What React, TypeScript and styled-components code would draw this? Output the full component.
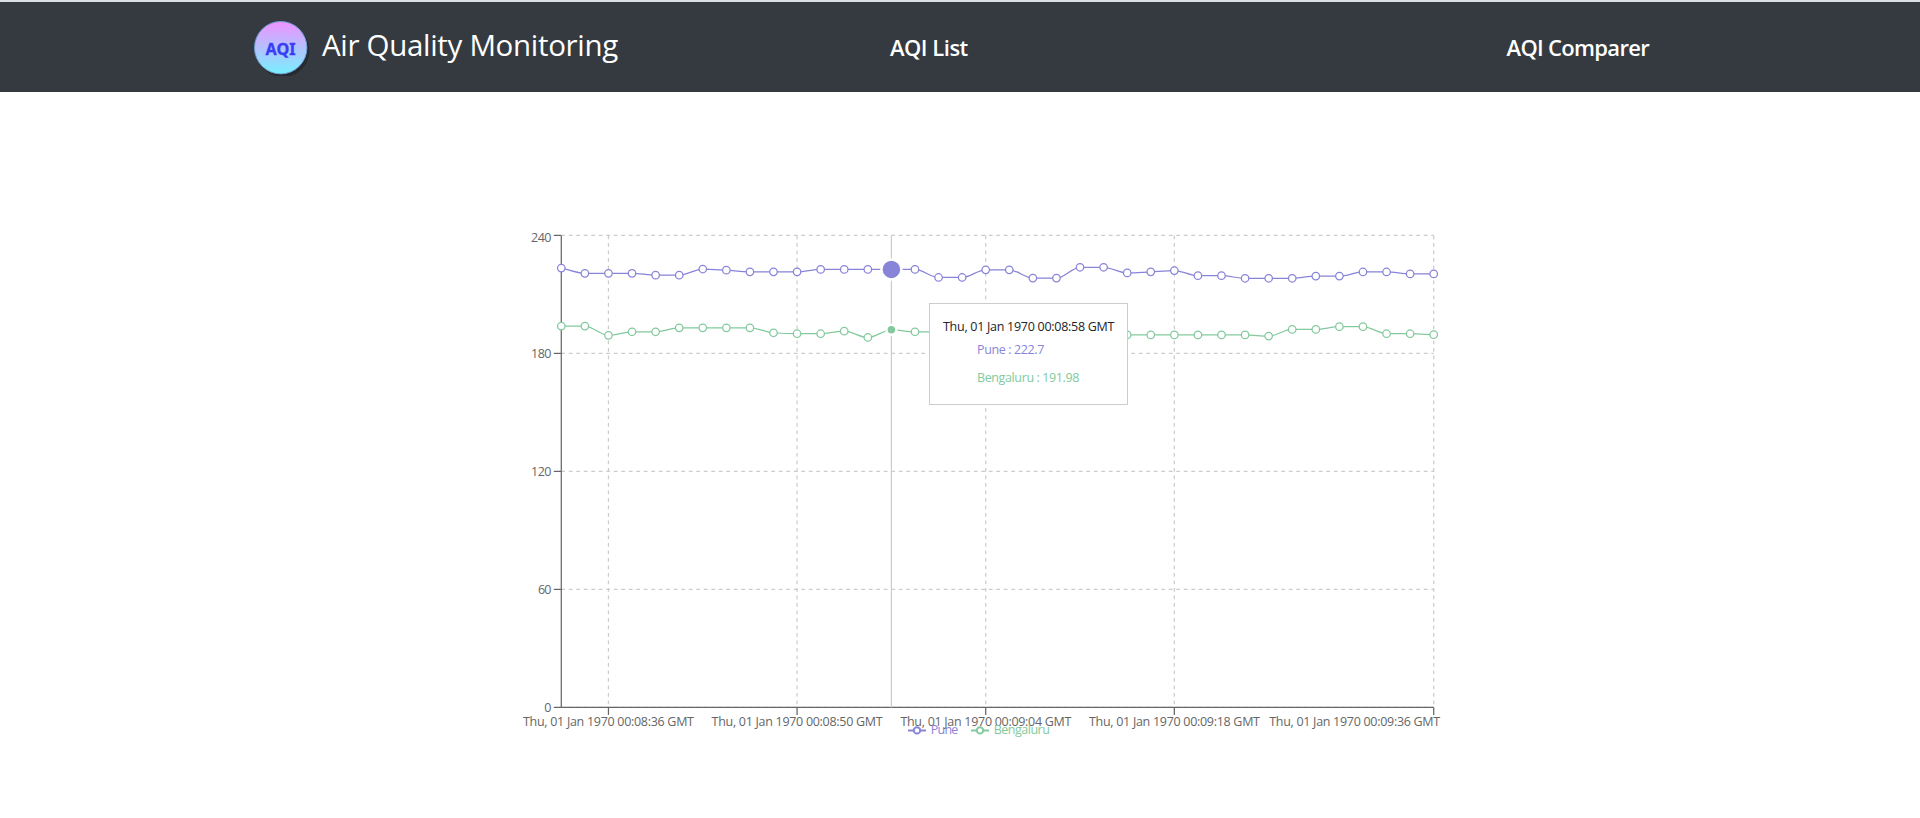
import React from "react";
import styled, { createGlobalStyle } from "styled-components";

const GlobalStyle = createGlobalStyle`
  * { box-sizing: border-box; }
  body {
    margin: 0;
    background: #fff;
    color: #212529;
    font-family: "Segoe UI", "Open Sans", "Noto Sans", sans-serif;
    overflow: hidden;
  }
`;

const Page = styled.div`
  display: flex;
  flex-direction: column;
  height: 818px;
`;

const Header = styled.header`
  display: grid;
  grid-template-columns: 636px 1fr auto;
  align-items: center;
  height: 92px;
  padding: 0 271px 0 254px;
  border-top: 2px solid #dadde2;
  background: #343a40;
  color: #fff;
`;

const Brand = styled.a`
  display: flex;
  align-items: center;
  gap: 12px;
  padding-top: 2px;
`;

const Logo = styled.svg`
  display: block;
  width: 56px;
  height: 56px;
`;

const Title = styled.span`
  margin-top: -6px;
  font-size: 29.5px;
  line-height: 44px;
  letter-spacing: -0.31px;
  white-space: nowrap;
`;

const NavLink = styled.a<{ $tracking: number }>`
  padding-bottom: 1px;
  font-size: 22px;
  font-weight: 600;
  line-height: 32px;
  letter-spacing: ${(p) => p.$tracking}px;
  white-space: nowrap;
`;

const ChartArea = styled.main`
  position: relative;
  width: 960px;
  height: 560px;
  margin: 108px 0 0 500px;
`;

const Surface = styled.svg`
  display: block;
`;

const Tooltip = styled.div`
  position: absolute;
  left: 429px;
  top: 103px;
  width: 199px;
  height: 102px;
  padding: 12px 13px;
  border: 1px solid #ccc;
  background: #fff;
  font-size: 12.5px;
`;

const TooltipLabel = styled.p`
  margin: 0;
  line-height: 22px;
  letter-spacing: -0.28px;
  white-space: nowrap;
`;

const TooltipList = styled.ul`
  margin: 0;
  padding: 0 0 0 34px;
  list-style: none;
`;

const TooltipItem = styled.li<{ $color: string }>`
  height: 28px;
  line-height: 24px;
  letter-spacing: -0.38px;
  white-space: nowrap;
  color: ${(p) => p.$color};
`;

const LEFT = 61.3;
const RIGHT = 933.7;
const TOP = 35.4;
const BOTTOM = 507.4;
const PURPLE = "#8884d8";
const GREEN = "#82ca9d";
const ACTIVE = 14;

const pune = [
  223.4, 220.7, 220.7, 220.7, 219.8, 219.8, 222.9, 222.3, 221.5, 221.5, 221.5, 222.7, 222.7,
  222.7, 222.7, 222.7, 218.6, 218.6, 222.5, 222.5, 218.3, 218.3, 223.8, 223.8, 220.9, 221.5,
  222.1, 219.5, 219.5, 218.2, 218.2, 218.2, 219.3, 219.3, 221.4, 221.4, 220.4, 220.4,
];
const bengaluru = [
  193.9, 193.9, 189.2, 191, 191, 193, 193, 193, 193, 190.5, 190, 190, 191.3, 188.1, 191.98, 191,
  191, 191, 191, 190.2, 190.2, 190.2, 189.4, 189.4, 189.4, 189.4, 189.4, 189.4, 189.4, 189.4,
  188.8, 192.2, 192.2, 193.6, 193.6, 190, 190, 189.5,
];

const px = (i: number) => LEFT + (i * (RIGHT - LEFT)) / 37;
const py = (v: number) => BOTTOM - (v * (BOTTOM - TOP)) / 240;

/** Monotone cubic path through equally spaced values. */
function monotonePath(values: number[]): string {
  const step = px(1) - px(0);
  const ys = values.map(py);
  const slopes = ys.slice(1).map((y, i) => (y - ys[i]) / step);
  const tangents = ys.map((_, i) => {
    if (i === 0) return slopes[0];
    if (i === ys.length - 1) return slopes[i - 1];
    const a = slopes[i - 1];
    const b = slopes[i];
    if (a * b <= 0) return 0;
    return Math.sign(a) * Math.min(Math.abs(a), Math.abs(b), Math.abs(a + b) / 4) * 2;
  });
  return ys
    .map((y, i) => {
      if (i === 0) return `M${px(0)},${y}`;
      const d = step / 3;
      return `C${px(i - 1) + d},${ys[i - 1] + d * tangents[i - 1]} ${px(i) - d},${y - d * tangents[i]} ${px(i)},${y}`;
    })
    .join("");
}

const xTicks = [
  { index: 2, label: "Thu, 01 Jan 1970 00:08:36 GMT", start: 23 },
  { index: 10, label: "Thu, 01 Jan 1970 00:08:50 GMT", start: 211.6 },
  { index: 18, label: "Thu, 01 Jan 1970 00:09:04 GMT", start: 400.4 },
  { index: 26, label: "Thu, 01 Jan 1970 00:09:18 GMT", start: 589 },
  { index: 37, label: "Thu, 01 Jan 1970 00:09:36 GMT", start: 769.2 },
];
const yTicks = [0, 60, 120, 180, 240];

function Series({ values, color }: { values: number[]; color: string }) {
  return (
    <g stroke={color} strokeWidth={1.25}>
      <path d={monotonePath(values)} fill="none" />
      {values.map((v, i) => (
        <circle key={i} cx={px(i)} cy={py(v)} r={3.75} fill="#fff" />
      ))}
    </g>
  );
}

function LegendEntry(props: { x: number; color: string; label: string; width: number }) {
  const { x, color, label, width } = props;
  return (
    <g>
      <path d={`M${x},530.4h6M${x + 12},530.4h6`} stroke={color} strokeWidth={2} />
      <circle cx={x + 9} cy={530.4} r={3.2} fill="none" stroke={color} strokeWidth={2} />
      <text x={x + 22.8} y={534} fill={color} textLength={width} fontSize={12.5}>
        {label}
      </text>
    </g>
  );
}

function LineChart() {
  return (
    <Surface width={960} height={560}>
      <g stroke="#ccc" strokeWidth={1.25} strokeDasharray="3.75 3.75">
        {yTicks.map((v) => (
          <line key={v} x1={LEFT} x2={RIGHT} y1={py(v)} y2={py(v)} />
        ))}
        {xTicks.map((t) => (
          <line key={t.index} x1={px(t.index)} x2={px(t.index)} y1={TOP} y2={BOTTOM} />
        ))}
      </g>
      <g stroke="#666" strokeWidth={1.25}>
        <line x1={LEFT} x2={RIGHT} y1={BOTTOM} y2={BOTTOM} />
        <line x1={LEFT} x2={LEFT} y1={TOP} y2={BOTTOM} />
        {yTicks.map((v) => (
          <line key={v} x1={LEFT - 7.5} x2={LEFT} y1={py(v)} y2={py(v)} />
        ))}
        {xTicks.map((t) => (
          <line key={t.index} x1={px(t.index)} x2={px(t.index)} y1={BOTTOM} y2={BOTTOM + 7.5} />
        ))}
      </g>
      <g fill="#666" fontSize={12.5}>
        {yTicks.map((v) => (
          <text
            key={v}
            x={51.5}
            y={py(v) + (v === 240 ? 6.4 : 4.6)}
            textAnchor="end"
            textLength={String(v).length * 6.8}
          >
            {v}
          </text>
        ))}
        {xTicks.map((t) => (
          <text key={t.index} x={t.start} y={526} textLength={171}>
            {t.label}
          </text>
        ))}
      </g>
      <line x1={px(ACTIVE)} x2={px(ACTIVE)} y1={TOP} y2={BOTTOM} stroke="#ccc" strokeWidth={1.25} />
      <Series values={pune} color={PURPLE} />
      <Series values={bengaluru} color={GREEN} />
      <g stroke="#fff" strokeWidth={2.5}>
        <circle cx={px(ACTIVE)} cy={py(pune[ACTIVE])} r={10} fill={PURPLE} />
        <circle cx={px(ACTIVE)} cy={py(bengaluru[ACTIVE])} r={5} fill={GREEN} />
      </g>
      <LegendEntry x={408} color={PURPLE} label="Pune" width={27.5} />
      <LegendEntry x={471} color={GREEN} label="Bengaluru" width={56} />
    </Surface>
  );
}

function AqiLogo() {
  return (
    <Logo viewBox="0 0 56 56">
      <defs>
        <linearGradient id="logoFill" x1="0" y1="0" x2="0" y2="1">
          <stop offset="0" stopColor="#ee92ff" />
          <stop offset="1" stopColor="#78f0ff" />
        </linearGradient>
      </defs>
      <circle cx="29" cy="30.5" r="26.5" fill="#22262a" fillOpacity="0.75" />
      <circle cx="26.7" cy="27.7" r="26.2" fill="url(#logoFill)" stroke="#6c9fd0" strokeWidth="1" />
      <text
        x="11.5"
        y="35"
        fontSize="15.5"
        fontWeight="700"
        fontFamily="Noto Sans, sans-serif"
        fill="#3a3cf5"
        stroke="#3a3cf5"
        strokeWidth="0.3"
        textLength="30"
        lengthAdjust="spacingAndGlyphs"
      >
        AQI
      </text>
    </Logo>
  );
}

export default function App() {
  return (
    <Page>
      <GlobalStyle />
      <Header>
        <Brand>
          <AqiLogo />
          <Title>Air Quality Monitoring</Title>
        </Brand>
        <NavLink $tracking={-0.5}>AQI List</NavLink>
        <NavLink $tracking={-0.7}>AQI Comparer</NavLink>
      </Header>
      <ChartArea>
        <LineChart />
        <Tooltip>
          <TooltipLabel>Thu, 01 Jan 1970 00:08:58 GMT</TooltipLabel>
          <TooltipList>
            <TooltipItem $color={PURPLE}>Pune : 222.7</TooltipItem>
            <TooltipItem $color={GREEN}>Bengaluru : 191.98</TooltipItem>
          </TooltipList>
        </Tooltip>
      </ChartArea>
    </Page>
  );
}
